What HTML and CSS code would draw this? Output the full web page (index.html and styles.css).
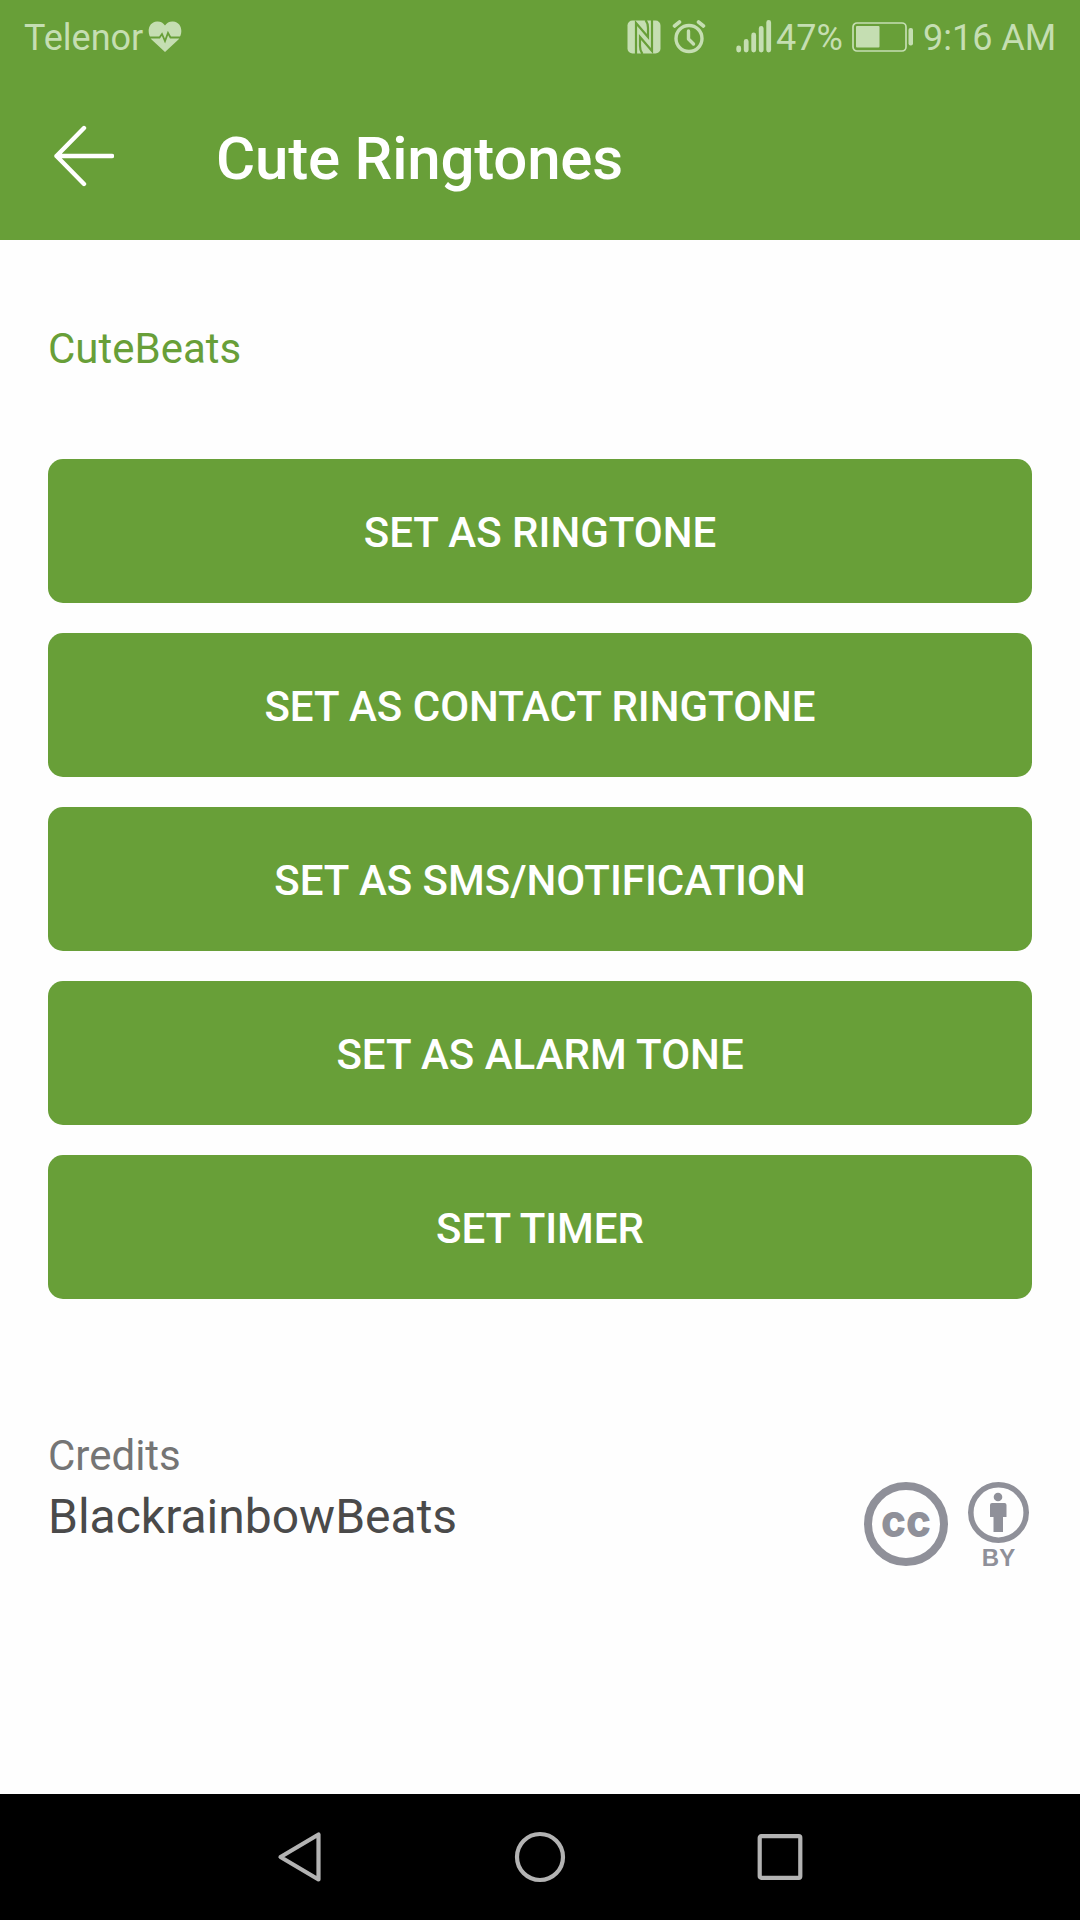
FILE: index.html
```html
<!DOCTYPE html>
<html lang="en">
<head>
<meta charset="utf-8">
<title>Cute Ringtones</title>
<link rel="stylesheet" href="styles.css">
</head>
<body>
<div class="screen">
  <div class="status-bar">
    <span class="carrier">Telenor</span>
    <svg class="heart" width="34" height="32" viewBox="0 0 34 32">
      <path d="M17 31 L3.5 18.5 C-1.5 12 0 1 9 0.5 C12.500 .3 15.500 2 17 4.500 C18.500 2 21.500 .3 25 .5 C34 1 35.500 12 30.500 18.500 Z" fill="currentColor"/>
      <path d="M0 16.500 H11.500 L14 13 L17 20 L20 12 L22.500 16.500 H34" fill="none" stroke="#689f38" stroke-width="1.800"/>
    </svg>
    <svg class="nfc" width="34" height="34" viewBox="0 0 34 34">
      <rect x=".5" y=".5" width="33" height="33" rx="5" fill="currentColor"/>
      <path d="M9 34 V3 L21 17 V8 Q21 3 18.500 0 M25 0 V31 L13 17 V26 Q13 31 15.500 34" fill="none" stroke="#689f38" stroke-width="2.200"/>
    </svg>
    <svg class="alarm" width="34" height="34" viewBox="0 0 34 34" fill="none" stroke="currentColor">
      <circle cx="17" cy="18.500" r="13" stroke-width="3.400"/>
      <path d="M2.500 6 L7.500 2 M26.500 2 L31.500 6" stroke-width="3.600" stroke-linecap="round"/>
      <path d="M16.500 11 V19 L21.500 24" stroke-width="3.400" stroke-linecap="round" stroke-linejoin="round"/>
    </svg>
    <svg class="signal" width="36" height="34" viewBox="0 0 36 34" stroke="currentColor" stroke-width="4.800" stroke-linecap="round">
      <path d="M2.700 28V30M10.200 21.500V30M17.700 15V30M25.200 8.500V30M32.700 2.500V30"/>
    </svg>
    <span class="percent">47%</span>
    <svg class="battery" width="61" height="30" viewBox="0 0 61 30">
      <rect x="1" y="1" width="53" height="28" rx="4" fill="none" stroke="currentColor" stroke-width="1.700"/>
      <rect x="4" y="4" width="23.500" height="21.500" rx="1" fill="currentColor"/>
      <rect x="56.500" y="6" width="4.500" height="17.500" rx="2" fill="currentColor"/>
    </svg>
    <span class="clock">9:16 AM</span>
  </div>

  <header class="app-bar">
    <svg class="back" width="62" height="64" viewBox="0 0 62 64" fill="none" stroke="#fff" stroke-width="4.400" stroke-linecap="round" stroke-linejoin="round">
      <path d="M32 4 L4.500 32 L32 60 M4.500 32 H60"/>
    </svg>
    <h1 class="title">Cute Ringtones</h1>
  </header>

  <main class="content">
    <h2 class="tone-name">CuteBeats</h2>
    <div class="actions">
      <button class="action">SET AS RINGTONE</button>
      <button class="action">SET AS CONTACT RINGTONE</button>
      <button class="action">SET AS SMS/NOTIFICATION</button>
      <button class="action">SET AS ALARM TONE</button>
      <button class="action">SET TIMER</button>
    </div>
    <section class="credits">
      <div class="credit-text">
        <p class="credit-label">Credits</p>
        <p class="credit-author">BlackrainbowBeats</p>
      </div>
      <div class="license">
        <svg width="84" height="84" viewBox="0 0 84 84">
          <circle cx="42" cy="42" r="38" fill="none" stroke="currentColor" stroke-width="8"/>
          <text class="cc" x="42" y="54.500" text-anchor="middle" textLength="50" lengthAdjust="spacingAndGlyphs">cc</text>
        </svg>
        <div class="by">
          <svg width="61" height="61" viewBox="0 0 61 61">
            <circle cx="30.500" cy="30.500" r="27.700" fill="none" stroke="currentColor" stroke-width="5.600"/>
            <circle cx="30" cy="15" r="4.300" fill="currentColor"/>
            <path d="M24 21 H36.500 Q38.500 21 38.500 23 V35 H35 V50 H25.500 V35 H22 V23 Q22 21 24 21Z" fill="currentColor"/>
          </svg>
          <span class="by-label">BY</span>
        </div>
      </div>
    </section>
  </main>

  <nav class="nav-bar">
    <svg width="50" height="54" viewBox="0 0 50 54"><path d="M43.500 4.500 V49.500 L5.500 27 Z"/></svg>
    <svg width="54" height="54" viewBox="0 0 54 54"><circle cx="27" cy="27" r="23"/></svg>
    <svg width="50" height="54" viewBox="0 0 50 54"><rect x="4.700" y="6.200" width="40.600" height="41.600" rx="1.500"/></svg>
  </nav>
</div>
</body>
</html>
```

FILE: styles.css
```css
* {
  box-sizing: border-box;
  margin: 0;
  padding: 0;
}

body {
  font-family: Roboto, sans-serif;
  background: #fefefe;
}

svg {
  display: block;
  flex: none;
}

.screen {
  width: 1080px;
  height: 1920px;
  display: flex;
  flex-direction: column;
}

.status-bar {
  height: 72px;
  padding: 1px 25px 0 24px;
  display: flex;
  align-items: center;
  background: #689f38;
  color: #c5deb2;
  font-size: 36px;
  line-height: 70px;
  white-space: nowrap;
}

.status-bar span {
  padding-top: 2px;
}

.carrier {
  width: 124px;
}

.nfc {
  margin-left: auto;
}

.alarm {
  margin-left: 11px;
}

.signal {
  margin-left: 30px;
}

.percent {
  width: 76px;
  margin-left: 4px;
}

.clock {
  width: 132px;
  margin-left: 10px;
}

.app-bar {
  height: 168px;
  padding: 0 52px;
  display: flex;
  align-items: center;
  background: #689f38;
}

.title {
  margin-left: 102px;
  padding-top: 5px;
  color: #fff;
  font-size: 60px;
  font-weight: 500;
  letter-spacing: -0.2px;
}

.content {
  flex: 1;
  padding: 84px 48px 0;
}

.tone-name {
  color: #689f38;
  font-size: 42px;
  font-weight: 400;
  line-height: 50px;
}

.actions {
  margin-top: 85px;
  display: flex;
  flex-direction: column;
  gap: 30px;
}

.action {
  height: 144px;
  padding-top: 3px;
  border: 0;
  border-radius: 15px;
  background: #689f38;
  color: #fff;
  font: 500 42px Roboto, sans-serif;
}

.credits {
  margin-top: 132px;
  display: flex;
  justify-content: space-between;
}

.credit-label {
  color: #757575;
  font-size: 42px;
  line-height: 50px;
}

.credit-author {
  margin-top: 7px;
  color: #4a4a4a;
  font-size: 48px;
  line-height: 58px;
}

.license {
  padding: 51px 3px 0 0;
  display: flex;
  gap: 20px;
  color: #8f9099;
}

.cc {
  font: 800 46px Inter, sans-serif;
  fill: currentColor;
}

.by {
  display: flex;
  flex-direction: column;
  align-items: center;
}

.by-label {
  margin-top: 2px;
  font: 700 24px/26px "Liberation Sans", sans-serif;
}

.nav-bar {
  height: 126px;
  padding: 0 275px;
  display: flex;
  align-items: center;
  justify-content: space-between;
  background: #000;
}

.nav-bar svg {
  fill: none;
  stroke: #b3b3b3;
  stroke-width: 4.200;
  stroke-linejoin: round;
}
```
